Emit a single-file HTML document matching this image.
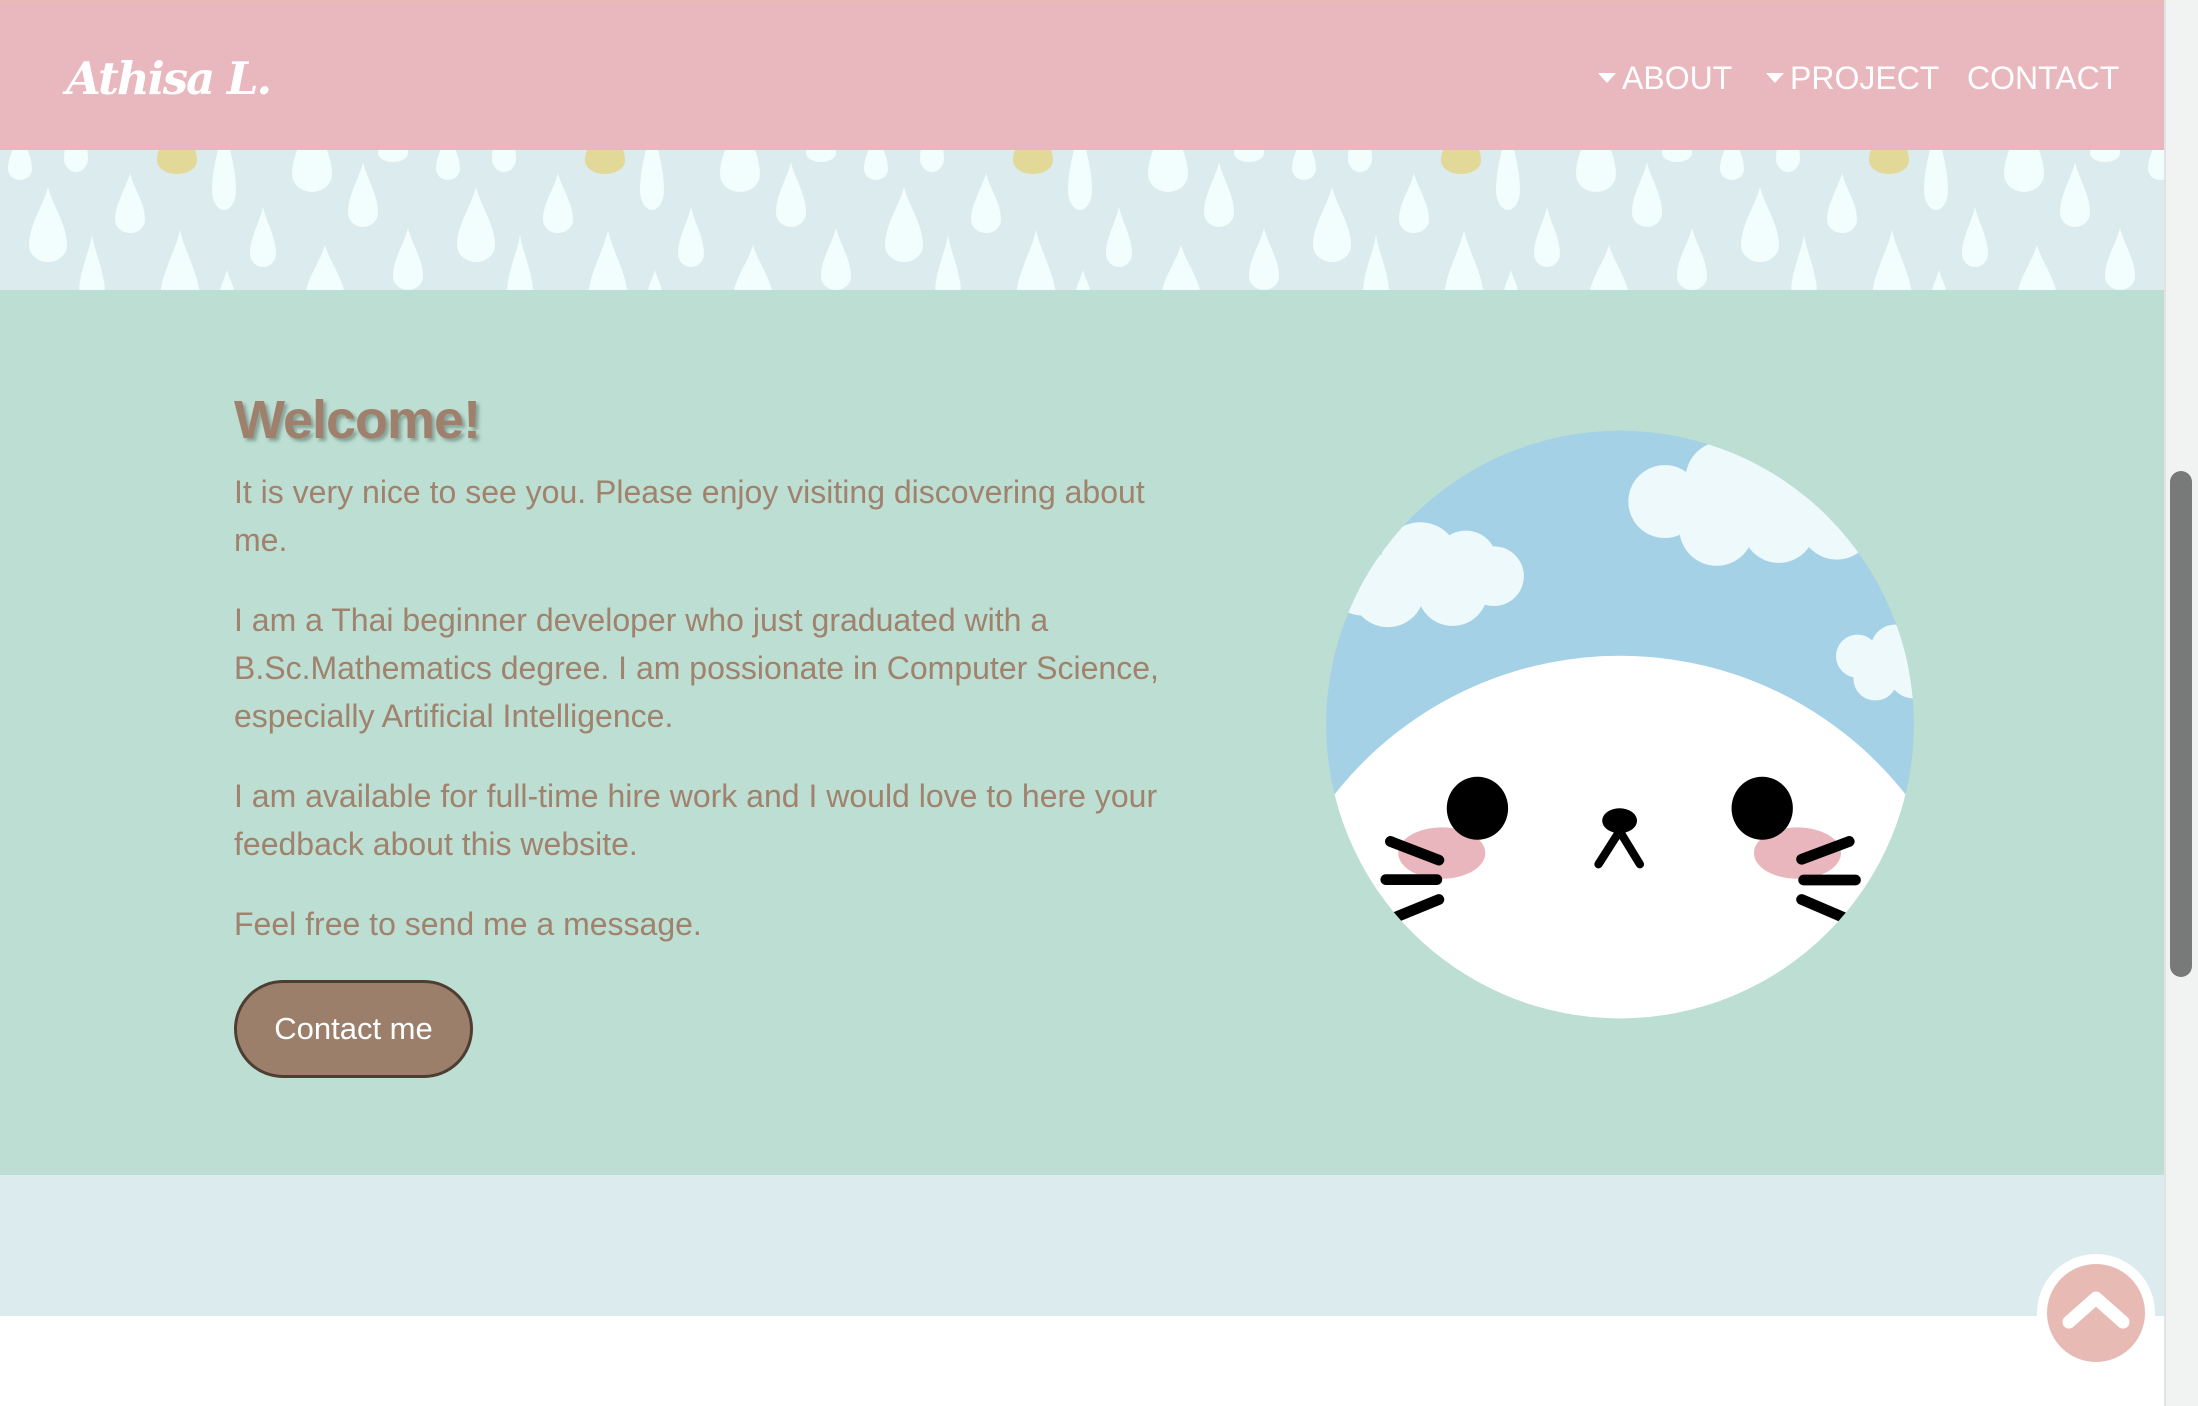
<!DOCTYPE html>
<html><head><meta charset="utf-8"><style>
*{margin:0;padding:0;box-sizing:border-box}
html,body{width:2198px;height:1406px;overflow:hidden;background:#fff;font-family:"Liberation Sans",sans-serif}
.hdr{position:absolute;left:0;top:0;width:2164px;height:150px;background:#e9b8bf;border-top:2px solid #e8bcb2}
.logo{position:absolute;left:66px;top:50px;color:#fff;font:italic bold 45px "DejaVu Serif",serif;letter-spacing:-2px}
.nav{position:absolute;top:58px;color:#fff;font-size:32px}
.tri{display:inline-block;width:0;height:0;border-left:9px solid transparent;border-right:9px solid transparent;border-top:10px solid #fff;vertical-align:middle;margin-right:6px;position:relative;top:-3px}
.rain{position:absolute;left:0;top:150px;width:2164px;height:140px}
.green{position:absolute;left:0;top:290px;width:2164px;height:885px;background:#bcded3}
.lb{position:absolute;left:0;top:1175px;width:2164px;height:141px;background:#dcecee}
h1{position:absolute;left:234px;top:389px;font-size:54px;font-weight:bold;color:#9e806c;text-shadow:3px 3px 3px rgba(70,90,80,.45);letter-spacing:-1px}
.txt{position:absolute;left:234px;top:468px;width:945px;color:#a0826d;font-size:32px;line-height:48px}
.txt p{margin-bottom:32px}
.btn{position:absolute;left:234px;top:980px;width:239px;height:98px;border-radius:49px;background:#9c7f6b;border:3px solid #4e3e32;color:#fff;font-size:31px;text-align:center;line-height:92px}
.sb{position:absolute;left:2164px;top:0;width:34px;height:1406px;background:#f1f3f2;border-left:2px solid #e2e2e2}
.thumb{position:absolute;left:2170px;top:471px;width:22px;height:506px;border-radius:11px;background:#777a79}
.top{position:absolute;left:2037px;top:1254px;width:118px;height:118px;border-radius:50%;background:#fff}
.top .in{position:absolute;left:10px;top:10px;width:98px;height:98px;border-radius:50%;background:#e8bab4}
</style></head><body>
<div class="hdr"><div class="logo">Athisa L.</div>
<div class="nav" style="left:1598px"><span class="tri"></span>ABOUT</div>
<div class="nav" style="left:1766px"><span class="tri"></span>PROJECT</div>
<div class="nav" style="left:1967px">CONTACT</div>
</div>
<svg class="rain" width="2164" height="140">
<defs>
<path id="d" d="M0,-1 C0.12,-0.75 0.5,-0.5 0.5,-0.22 A0.5,0.22 0 0 1 -0.5,-0.22 C-0.5,-0.5 -0.12,-0.75 0,-1Z"/>
<pattern id="p" width="428" height="140" patternUnits="userSpaceOnUse">
<g fill="#f2fdfd">
<use href="#d" transform="translate(76,22) scale(24,60)"/>
<use href="#d" transform="translate(224,60) scale(24,90)"/>
<use href="#d" transform="translate(312,42) scale(40,80)"/>
<use href="#d" transform="translate(393,12) scale(30,40)"/>
<use href="#d" transform="translate(130,83) scale(30,60)"/>
<use href="#d" transform="translate(48,112) scale(38,75)"/>
<use href="#d" transform="translate(92,160) scale(26,75)"/>
<use href="#d" transform="translate(180,170) scale(40,90)"/>
<use href="#d" transform="translate(263,117) scale(26,60)"/>
<use href="#d" transform="translate(227,150) scale(14,30)"/>
<use href="#d" transform="translate(363,77) scale(30,65)"/>
<use href="#d" transform="translate(325,165) scale(40,70)"/>
<use href="#d" transform="translate(408,140) scale(30,62)"/>
<use href="#d" transform="translate(20,30) scale(24,50)"/>
</g>
<use href="#d" fill="#e2d898" transform="translate(177,24) scale(40,60)"/>
</pattern></defs>
<rect width="2164" height="140" fill="#dcecee"/>
<rect width="2164" height="140" fill="url(#p)"/>
</svg>
<div class="green"></div>
<div class="lb"></div>
<h1>Welcome!</h1>
<div class="txt">
<p>It is very nice to see you. Please enjoy visiting discovering about me.</p>
<p>I am a Thai beginner developer who just graduated with a B.Sc.Mathematics degree. I am possionate in Computer Science, especially Artificial Intelligence.</p>
<p>I am available for full-time hire work and I would love to here your feedback about this website.</p>
<p>Feel free to send me a message.</p>
</div>
<div class="btn">Contact me</div>
<svg style="position:absolute;left:1300px;top:400px" width="650" height="640" viewBox="0 0 1568 1544">
<defs><clipPath id="c"><circle cx="772" cy="783" r="709"/></clipPath></defs>
<g clip-path="url(#c)">
<rect width="1568" height="1544" fill="#a5d1e6"/>
<g fill="#edf9fb">
<circle cx="290" cy="390" r="95"/><circle cx="400" cy="390" r="75"/><circle cx="468" cy="425" r="72"/><circle cx="212" cy="460" r="88"/><circle cx="368" cy="460" r="85"/><circle cx="150" cy="440" r="80"/>
<circle cx="880" cy="245" r="88"/><circle cx="1020" cy="190" r="90"/><circle cx="1005" cy="310" r="90"/><circle cx="1155" cy="305" r="88"/><circle cx="1295" cy="295" r="90"/><circle cx="1110" cy="200" r="100"/><circle cx="1230" cy="200" r="100"/>
<circle cx="1345" cy="618" r="52"/><circle cx="1388" cy="672" r="53"/><circle cx="1435" cy="600" r="58"/><circle cx="1480" cy="660" r="60"/>
</g>
<circle cx="772" cy="1493" r="876" fill="#fff"/>
<ellipse cx="342" cy="1093" rx="105" ry="62" fill="#e9b6bd"/>
<ellipse cx="1200" cy="1093" rx="105" ry="62" fill="#e9b6bd"/>
<ellipse cx="428" cy="985" rx="74" ry="76"/>
<ellipse cx="1115" cy="985" rx="74" ry="76"/>
<ellipse cx="771" cy="1015" rx="42" ry="30"/>
<g stroke="#000" stroke-linecap="round" fill="none">
<path d="M771,1040 L720,1120 M771,1040 L820,1120" stroke-width="20"/>
<path d="M218,1065 L335,1110 M207,1157 L330,1157 M335,1205 L225,1250 M1325,1065 L1210,1108 M1215,1158 L1340,1158 M1210,1205 L1315,1250" stroke-width="26"/>
</g>
</g>
</svg>
<div class="sb"></div><div class="thumb"></div>
<div class="top"><div class="in">
<svg width="98" height="98" viewBox="0 0 98 98"><path d="M22,58 L49,34 L76,58" stroke="#fff" stroke-width="13" fill="none" stroke-linecap="round" stroke-linejoin="round"/></svg>
</div></div>
</body></html>
